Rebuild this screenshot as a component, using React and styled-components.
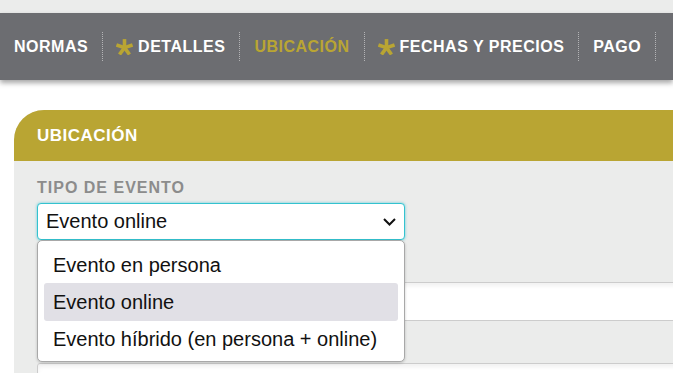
import React from "react";
import styled, { createGlobalStyle } from "styled-components";

const Global = createGlobalStyle`
  html, body {
    margin: 0;
    padding: 0;
    background: #ffffff;
    overflow: hidden;
    font-family: "Liberation Sans", Arial, sans-serif;
  }
`;

const TopStrip = styled.div`
  height: 13px;
  background: #ebeceb;
`;

const NavBar = styled.nav`
  position: relative;
  z-index: 2;
  height: 67px;
  background: #6c6d71;
  box-shadow: 0 3px 5px rgba(0, 0, 0, 0.35);
  display: flex;
  align-items: center;
`;

const NavItem = styled.div`
  display: flex;
  align-items: center;
  gap: 5px;
  padding: 0 14px;
  font-size: 16px;
  font-weight: 700;
  letter-spacing: 0.5px;
  color: ${(p) => (p.$active ? "#b9a533" : "#ffffff")};
  white-space: nowrap;
`;

const Sep = styled.span`
  width: 0;
  height: 29px;
  border-left: 1px dotted #b4b4b6;
`;

const StarSvg = styled.svg`
  width: 17px;
  height: 16px;
  flex: none;
  margin-left: -1px;
`;

const Star = () => (
  <StarSvg viewBox="0 0 17 16">
    <g stroke="#b9a533" strokeWidth="3.6" strokeLinecap="butt">
      {[-90, -18, 54, 126, 198].map((a) => {
        const r = (a * Math.PI) / 180;
        return (
          <line
            key={a}
            x1="8.5"
            y1="8.6"
            x2={8.5 + 8.5 * Math.cos(r)}
            y2={8.6 + 8.5 * Math.sin(r)}
          />
        );
      })}
    </g>
  </StarSvg>
);

const Main = styled.main`
  padding: 30px 0 0 14px;
`;

const Card = styled.section`
  width: 720px;
  background: #ebeceb;
  border-top-left-radius: 30px;
  overflow: hidden;
`;

const CardHeader = styled.h2`
  margin: 0;
  height: 51px;
  display: flex;
  align-items: center;
  padding-left: 23px;
  background: #b9a533;
  color: #ffffff;
  font-size: 17px;
  font-weight: 700;
  letter-spacing: 0.5px;
`;

const CardBody = styled.div`
  padding: 17px 23px 40px 23px;
`;

const Label = styled.div`
  font-size: 16px;
  line-height: 20px;
  font-weight: 700;
  letter-spacing: 1px;
  color: #8c8c8c;
  margin-bottom: 5px;
`;

const SelectWrap = styled.div`
  position: relative;
  z-index: 3;
  width: 368px;
`;

const SelectBox = styled.div`
  box-sizing: border-box;
  height: 37px;
  display: flex;
  align-items: center;
  justify-content: space-between;
  padding: 0 8px 0 8px;
  background: #ffffff;
  border: 1px solid #33c2cf;
  border-radius: 4px;
  box-shadow: 0 0 3px rgba(40, 190, 205, 0.7);
  font-size: 20px;
  color: #111111;
`;

const ChevronSvg = styled.svg`
  width: 13px;
  height: 8px;
`;

const Chevron = () => (
  <ChevronSvg viewBox="0 0 13 8">
    <path d="M1 1 L6.5 6.5 L12 1" fill="none" stroke="#111" strokeWidth="2" />
  </ChevronSvg>
);

const Menu = styled.ul`
  position: absolute;
  top: 37px;
  left: 0;
  right: 0;
  margin: 0;
  padding: 5px 6px 5px 6px;
  list-style: none;
  box-sizing: border-box;
  height: 122px;
  background: #ffffff;
  border: 1px solid #a8a8a8;
  border-radius: 5px;
  box-shadow: 0 1px 3px rgba(0, 0, 0, 0.2);
`;

const Option = styled.li`
  height: 37.3px;
  display: flex;
  align-items: center;
  padding: 1px 0 0 9px;
  box-sizing: border-box;
  border-radius: 3px;
  font-size: 20px;
  color: #111111;
  background: ${(p) => (p.$selected ? "#e1e0e6" : "transparent")};
  white-space: nowrap;
`;

const Field = styled.div`
  box-sizing: border-box;
  height: 39px;
  margin-top: 42px;
  background: #ffffff;
  border: 1px solid #cccccc;
  border-radius: 3px;
  box-shadow: inset 0 3px 4px rgba(0, 0, 0, 0.06);
`;

const options = [
  "Evento en persona",
  "Evento online",
  "Evento híbrido (en persona + online)",
];

export default function App() {
  return (
    <>
      <Global />
      <TopStrip />
      <NavBar>
        <NavItem>NORMAS</NavItem>
        <Sep />
        <NavItem>
          <Star />
          DETALLES
        </NavItem>
        <Sep />
        <NavItem $active>UBICACIÓN</NavItem>
        <Sep />
        <NavItem>
          <Star />
          FECHAS Y PRECIOS
        </NavItem>
        <Sep />
        <NavItem>PAGO</NavItem>
        <Sep />
      </NavBar>
      <Main>
        <Card>
          <CardHeader>UBICACIÓN</CardHeader>
          <CardBody>
            <Label>TIPO DE EVENTO</Label>
            <SelectWrap>
              <SelectBox>
                <span>Evento online</span>
                <Chevron />
              </SelectBox>
              <Menu>
                {options.map((o) => (
                  <Option key={o} $selected={o === "Evento online"}>
                    {o}
                  </Option>
                ))}
              </Menu>
            </SelectWrap>
            <Field />
            <Field />
          </CardBody>
        </Card>
      </Main>
    </>
  );
}
